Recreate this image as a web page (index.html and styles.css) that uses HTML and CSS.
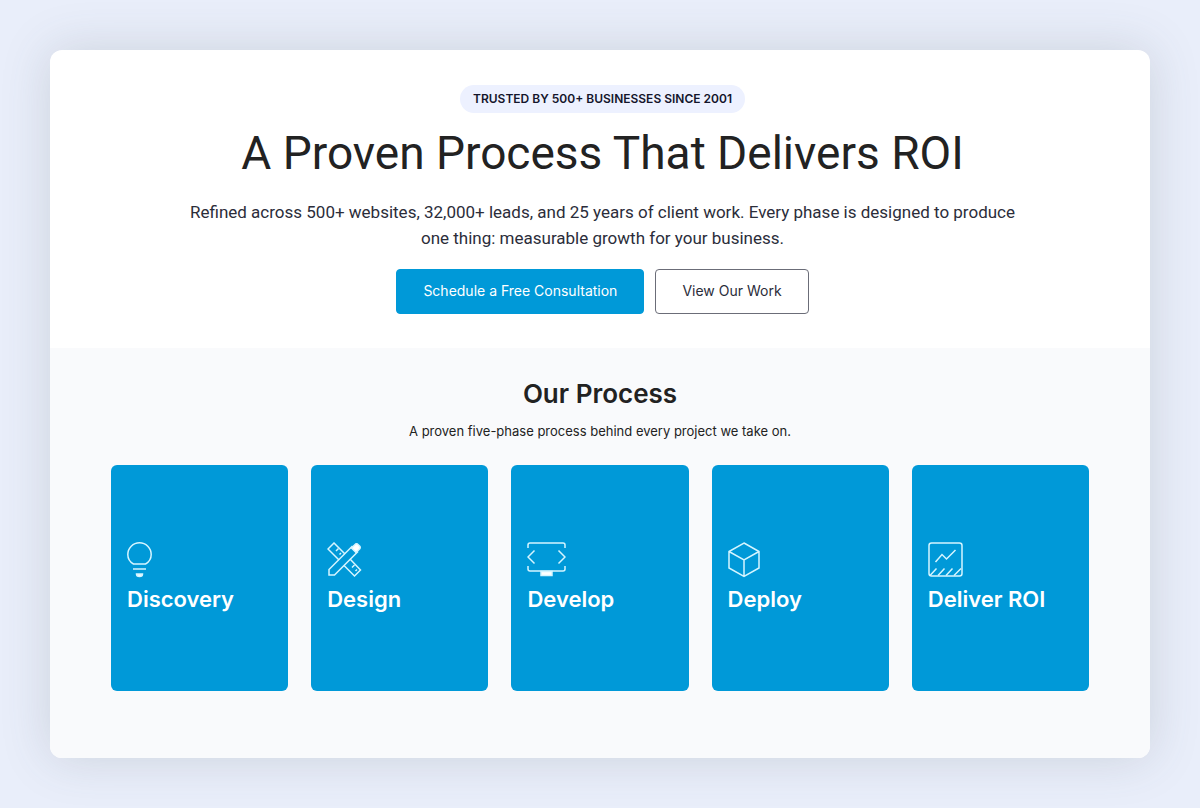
FILE: index.html
```html
<!DOCTYPE html>
<html lang="en">
<head>
  <meta charset="UTF-8">
  <meta name="viewport" content="width=device-width, initial-scale=1.0">
  <title>Our Process</title>
  <link rel="stylesheet" href="styles.css">
</head>
<body>
<main class="panel">
  <section class="hero">
    <span class="badge">TRUSTED BY 500+ BUSINESSES SINCE 2001</span>
    <h1>A Proven Process That Delivers ROI</h1>
    <p>Refined across 500+ websites, 32,000+ leads, and 25 years of client work. Every phase is designed to produce one thing: measurable growth for your business.</p>
    <div class="buttons">
      <button class="btn btn-primary">Schedule a Free Consultation</button>
      <button class="btn btn-outline">View Our Work</button>
    </div>
  </section>

  <section class="process">
    <h2>Our Process</h2>
    <p>A proven five-phase process behind every project we take on.</p>

    <div class="cards">
      <article class="card">
        <svg width="25" height="36" viewBox="0 0 25 36">
          <path d="M6.500 22 C3 20 .8 16.500 .8 12.500 A11.700 11.700 0 0 1 24.200 12.500 C24.200 16.500 22 20 18.500 22 Z"/>
          <path d="M6 27 H19"/>
          <path class="fill" d="M9.500 32 H15.500 C15.500 33.500 14.500 34.500 12.500 34.500 S9.500 33.500 9.500 32 Z"/>
        </svg>
        <h3>Discovery</h3>
      </article>

      <article class="card">
        <svg width="35" height="36" viewBox="0 0 35 36">
          <path d="M12 18 L1 7 L7 1 L18 12 M23 17 L33.500 28 L27.500 34 L17 23.500"/>
          <path d="M9 9 L11.500 6.500 M12.500 12.500 L14 11 M25 25.500 L27.500 23 M28.500 29 L30 27.500"/>
          <path d="M2 33 V27.500 L25 4.500 L30.500 10 L7.500 33 Z"/>
          <path class="fill" d="M24.500 6 L28.500 2 Q29.500 1.500 30.500 2 L33 4.500 Q33.500 5.500 33 6.500 L29 10.500 Z"/>
        </svg>
        <h3>Design</h3>
      </article>

      <article class="card">
        <svg width="39" height="36" viewBox="0 0 39 36">
          <path d="M1 6 V3 Q1 1 3 1 H36 Q38 1 38 3 V6 M1 24 V27 Q1 29 3 29 H36 Q38 29 38 27 V24"/>
          <path d="M7.500 8.500 L1 15 L7.500 21.500 M31.500 8.500 L38 15 L31.500 21.500"/>
          <path class="fill" d="M14 29.500 H25 V33.500 H14 Z"/>
        </svg>
        <h3>Develop</h3>
      </article>

      <article class="card">
        <svg width="32" height="36" viewBox="0 0 32 36">
          <path d="M16 1 L31 9.500 V26 L16 34.500 L1 26 V9.500 Z M1 9.500 L16 18 L31 9.500 M16 18 V34.500"/>
        </svg>
        <h3>Deploy</h3>
      </article>

      <article class="card">
        <svg width="35" height="36" viewBox="0 0 35 36">
          <rect x="1" y="1" width="33" height="33" rx="2.500"/>
          <path d="M7.500 20 L14 12.500 L18.500 17 L27.500 8"/>
          <path d="M2 33.500 L8.500 26.500 M10 33.500 L16.500 26.500 M18 33.500 L24.500 26.500 M26 33.500 L33 26.500"/>
        </svg>
        <h3>Deliver ROI</h3>
      </article>
    </div>
  </section>
</main>
</body>
</html>
```
FILE: styles.css
```css
* {
  box-sizing: border-box;
}
body {
  margin: 0;
  padding: 50px;
  background: #e9eefa;
  color: #222;
  font-family: Inter, "Liberation Sans", sans-serif;
}
h1, h2, h3, p {
  margin: 0;
}
.panel {
  border-radius: 12px;
  overflow: hidden;
  background: #fff;
  box-shadow: 0 0 50px rgba(70, 85, 90, 0.18);
}
.hero {
  display: flex;
  flex-direction: column;
  align-items: center;
  padding: 35px 20px 34px 25px;
  text-align: center;
}
.badge {
  padding: 0 13px;
  border-radius: 15px;
  background: #edf1ff;
  color: #14152b;
  font-size: 12px;
  font-weight: 600;
  line-height: 28px;
}
h1 {
  margin-top: 10px;
  font-family: Roboto, sans-serif;
  font-size: 46px;
  font-weight: 400;
  line-height: 60px;
}
.hero p {
  max-width: 840px;
  margin-top: 16px;
  color: #2b2d3a;
  font-family: Roboto, sans-serif;
  font-size: 17px;
  line-height: 26px;
}
.buttons {
  display: flex;
  flex-wrap: wrap;
  justify-content: center;
  gap: 11px;
  margin-top: 18px;
}
.btn {
  padding: 0 26px 2px;
  border: 1px solid #0099d8;
  border-radius: 4px;
  font-family: inherit;
  font-size: 14px;
  line-height: 41px;
  cursor: pointer;
}
.btn-primary {
  background: #0099d8;
  color: #fff;
}
.btn-outline {
  border-color: #6b6d78;
  background: #fff;
  color: #2b2d3a;
}
.process {
  padding: 28px 61px 67px;
  background: #f9fafc;
  text-align: center;
}
h2 {
  font-size: 26px;
  font-weight: 600;
  line-height: 36px;
}
.process p {
  margin-top: 9px;
  font-size: 13px;
  line-height: 20px;
}
.cards {
  display: grid;
  grid-template-columns: repeat(5, 1fr);
  gap: 23px;
  margin-top: 24px;
}
.card {
  display: flex;
  flex-direction: column;
  justify-content: center;
  align-items: flex-start;
  min-height: 226px;
  padding: 0 16px;
  border-radius: 6px;
  background: #0099d8;
  color: #fff;
  text-align: left;
}
.card svg {
  fill: none;
  stroke: #d5f5ff;
  stroke-width: 1.5;
}
.card .fill {
  fill: #fff;
}
h3 {
  margin-top: 6px;
  font-size: 22px;
  font-weight: 600;
  line-height: 30px;
}
```
